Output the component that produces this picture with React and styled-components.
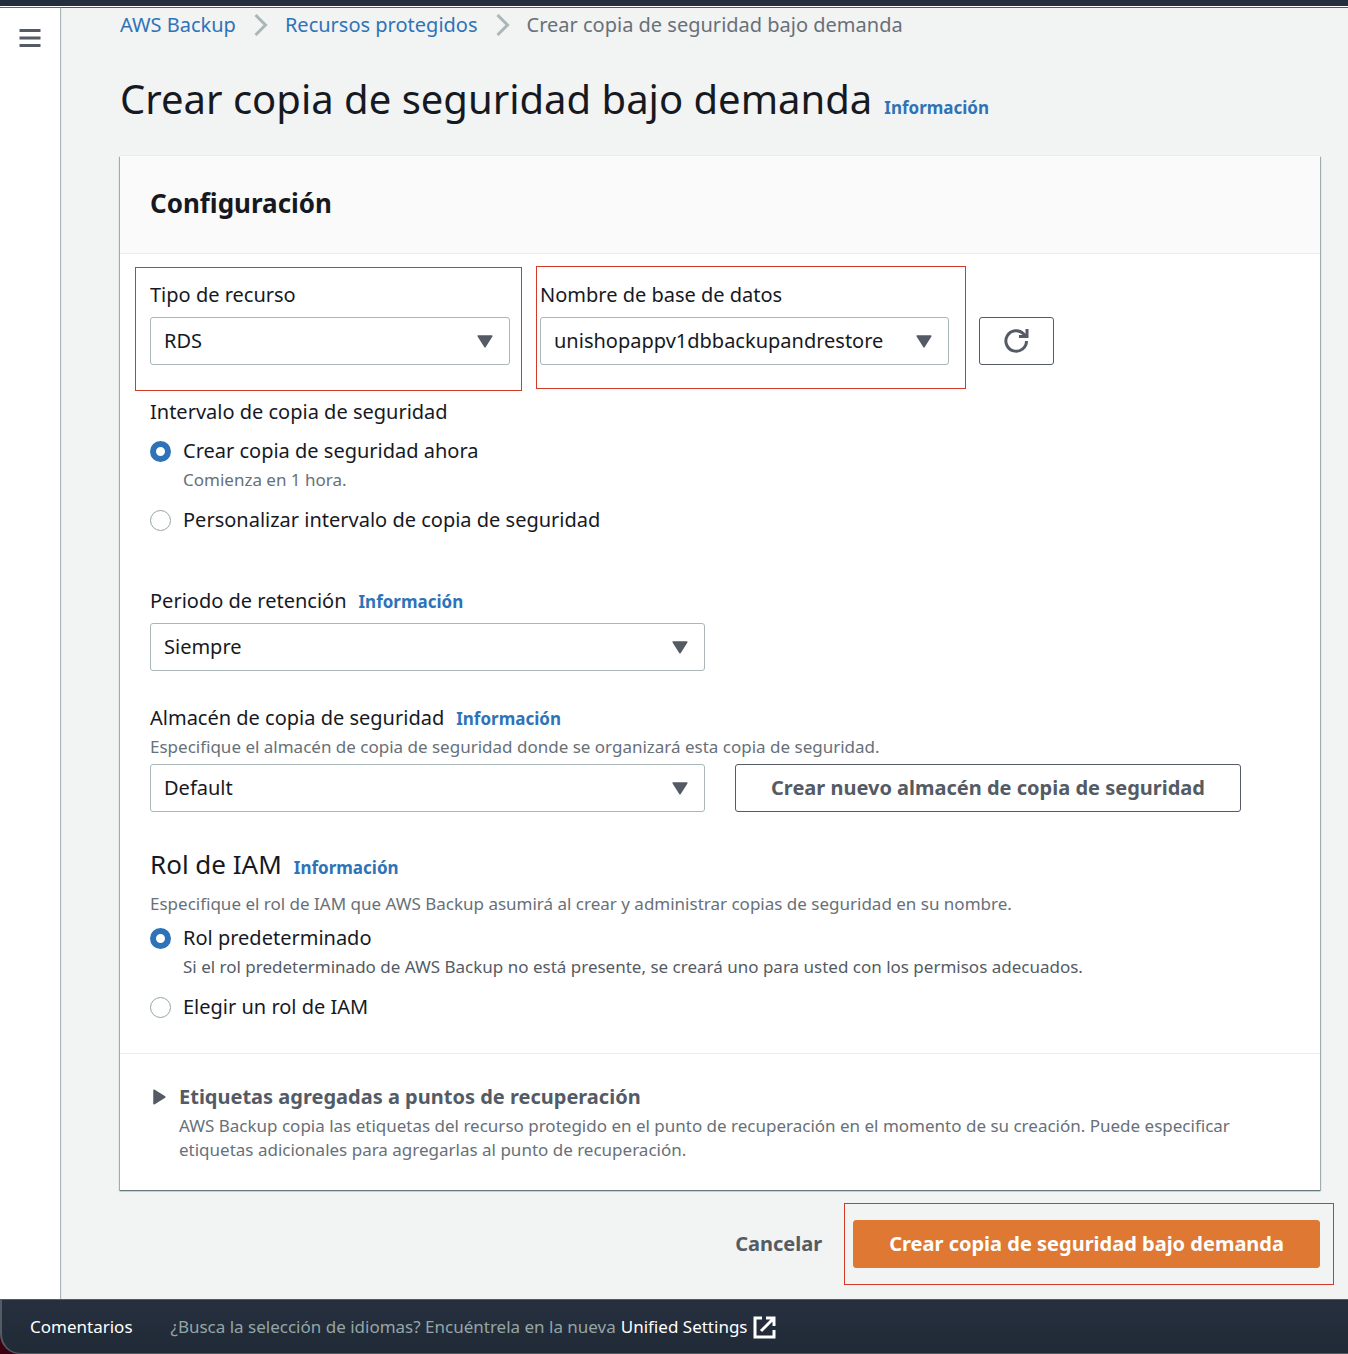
import React, { useState } from "react";
import styled, { createGlobalStyle } from "styled-components";

const font = '"Noto Sans", "Open Sans", sans-serif';

const GlobalStyle = createGlobalStyle`
  *, *::before, *::after { box-sizing: border-box; }
  body { margin: 0; background: #3a0010; }
  body, button, select, input { font-family: ${font}; }
  h1, h2, h3, p, fieldset, legend, ol { margin: 0; padding: 0; border: 0; }
`;

const Shell = styled.div`
  display: flex;
  flex-direction: column;
  min-height: 100vh;
  font-size: 20px;
  line-height: 32px;
  color: #16191f;
`;

const TopBar = styled.header`
  height: 8px;
  background: #232f3e;
  border-bottom: 1px solid #545b64;
  box-shadow: inset 0 -1px 0 #fff;
`;

const Body = styled.div`
  display: flex;
  flex: 1;
  background: #f2f3f3;
`;

const SideNav = styled.nav`
  flex: none;
  width: 60px;
  padding: 18px 18px 0;
  background: #fff;
  box-shadow: 1px 0 1px #aab7b8;
`;

const IconButton = styled.button`
  display: flex;
  align-items: center;
  justify-content: center;
  padding: 0;
  border: 0;
  background: none;
  color: #545b64;
  cursor: pointer;
`;

const Main = styled.main`
  flex: 1;
  min-width: 0;
  padding: 1px 28px 30px 60px;
`;

const Crumbs = styled.ol`
  display: flex;
  align-items: center;
  gap: 17px;
  list-style: none;
  color: #687078;
`;

const Crumb = styled.li`
  display: flex;
  align-items: center;
  gap: 18px;
`;

const Link = styled.a`
  color: #2e73b8;
  text-decoration: none;
`;

const InfoLink = styled(Link)`
  font-size: 17px;
  line-height: 24px;
  font-weight: 700;
`;

const PageTitle = styled.div`
  display: flex;
  align-items: baseline;
  gap: 12px;
  padding: 31px 0 30px;
`;

const Title = styled.h1`
  font-size: 40px;
  line-height: 54px;
  font-weight: 400;
`;

const Card = styled.section`
  background: #fff;
  box-shadow: 0 1px 1px #687b7c, 1px 1px 1px #aab7b8, -1px 1px 1px #aab7b8, 0 -1px 0 #eaeded;
`;

const CardHeader = styled.div`
  padding: 29px 30px 32px;
  background: #fafafa;
  border-bottom: 1px solid #eaeded;
`;

const CardTitle = styled.h2`
  font-size: 26px;
  line-height: 36px;
  font-weight: 700;
`;

const CardBody = styled.div`
  padding: 25px 30px 30px;
`;

const Row = styled.div`
  display: grid;
  grid-template-columns: ${(p) => p.$columns};
  align-items: end;
  gap: 30px;
`;

const Stack = styled.div`
  margin-top: ${(p) => p.$top}px;
`;

const LabelRow = styled.div`
  display: flex;
  align-items: baseline;
  gap: 12px;
`;

const FieldLabel = styled.label`
  display: block;
`;

const Marked = styled.div`
  position: relative;

  &::after {
    content: "";
    position: absolute;
    inset: ${(p) => p.$inset};
    border: 1px solid #d13a26;
    pointer-events: none;
  }
`;

const SelectBox = styled.div`
  position: relative;
  margin-top: ${(p) => (p.$tight ? 5 : 6)}px;

  svg {
    position: absolute;
    top: 18px;
    right: 17px;
    pointer-events: none;
  }
`;

const NativeSelect = styled.select`
  display: block;
  width: 100%;
  height: 48px;
  padding: 0 44px 2px 13px;
  appearance: none;
  border: 1px solid #aab7b8;
  border-radius: 3px;
  background: #fff;
  color: #16191f;
  font-size: 20px;
`;

const buttonKinds = {
  normal: { border: "#545b64", background: "#fff", color: "#545b64", pad: 35 },
  primary: { border: "#df7832", background: "#df7832", color: "#fff", pad: 35 },
  link: { border: "transparent", background: "transparent", color: "#545b64", pad: 30 },
};

const Button = styled.button`
  height: 48px;
  padding: 0 ${(p) => buttonKinds[p.$kind].pad}px 2px;
  border: 1px solid ${(p) => buttonKinds[p.$kind].border};
  border-radius: 3px;
  background: ${(p) => buttonKinds[p.$kind].background};
  color: ${(p) => buttonKinds[p.$kind].color};
  font-size: 20px;
  font-weight: 700;
  white-space: nowrap;
  cursor: pointer;
`;

const RefreshButton = styled(IconButton)`
  width: 75px;
  height: 48px;
  border: 1px solid #545b64;
  border-radius: 3px;
  background: #fff;
`;

const Hint = styled.p`
  font-size: 17px;
  line-height: 24px;
  color: ${(p) => (p.$dark ? "#545b64" : "#687078")};
  padding-top: 1px;
`;

const RadioRow = styled.div`
  display: grid;
  grid-template-columns: 21px 1fr;
  column-gap: 12px;
  align-items: center;
  margin-top: ${(p) => p.$top}px;

  p { grid-column: 2; }
`;

const Radio = styled.input`
  appearance: none;
  width: 21px;
  height: 21px;
  margin: 0;
  border: 1px solid #95a5a6;
  border-radius: 50%;
  background: #fff;

  &:checked { border: 6px solid #2e73b8; }
`;

const SubTitle = styled.h3`
  font-size: 26px;
  line-height: 36px;
  font-weight: 400;
`;

const Expandable = styled.div`
  display: grid;
  grid-template-columns: 18px 1fr;
  column-gap: 11px;
  padding: 27px 30px 28px;
  border-top: 1px solid #eaeded;
`;

const ExpandTitle = styled.h3`
  font-size: 20px;
  line-height: 32px;
  font-weight: 700;
  color: #545b64;
`;

const Actions = styled.div`
  display: flex;
  justify-content: flex-end;
  margin-top: 30px;
`;

const Footer = styled.footer`
  display: flex;
  align-items: center;
  gap: 38px;
  height: 55px;
  padding: 1px 28px 0;
  border: solid #545b64;
  border-width: 1px 0 1px 2px;
  border-bottom-left-radius: 20px;
  background: linear-gradient(#252f3e, #212b37);
  font-size: 17px;
  line-height: 24px;
  color: #95a5a6;
`;

const FooterLink = styled.a`
  display: inline-flex;
  align-items: center;
  gap: 5px;
  color: #fff;
  text-decoration: none;
`;

const FooterText = styled.p`
  display: flex;
  gap: 5px;
`;

const FooterBackdrop = styled.div`
  background: #3a0010;
`;

function Chevron() {
  return (
    <svg width="14" height="24" viewBox="0 0 14 24" fill="none" stroke="#aab7b8" strokeWidth="3" aria-hidden="true">
      <path d="M1.5 2 L11.5 12 L1.5 22" />
    </svg>
  );
}

function DownArrow() {
  return (
    <svg width="16" height="13" viewBox="0 0 16 13" fill="#545b64" stroke="#545b64" strokeWidth="1.5" strokeLinejoin="round" aria-hidden="true">
      <path d="M1.2 1 H14.8 L8 11.8 Z" />
    </svg>
  );
}

function Select({ id, value, tight }) {
  return (
    <SelectBox $tight={tight}>
      <NativeSelect id={id} defaultValue={value}>
        <option>{value}</option>
      </NativeSelect>
      <DownArrow />
    </SelectBox>
  );
}

function Info() {
  return <InfoLink href="#info">Información</InfoLink>;
}

function RadioOption({ id, name, checked, onChange, label, hint, darkHint, top }) {
  return (
    <RadioRow $top={top}>
      <Radio type="radio" id={id} name={name} checked={checked} onChange={onChange} />
      <FieldLabel htmlFor={id}>{label}</FieldLabel>
      {hint && <Hint $dark={darkHint}>{hint}</Hint>}
    </RadioRow>
  );
}

export default function App() {
  const [backupWindow, setBackupWindow] = useState("now");
  const [role, setRole] = useState("default");

  return (
    <Shell>
      <GlobalStyle />
      <TopBar />
      <Body>
        <SideNav>
          <IconButton aria-label="Abrir navegación">
            <svg width="24" height="24" viewBox="0 0 24 24" fill="none" stroke="currentColor" strokeWidth="3" aria-hidden="true">
              <path d="M1.5 4.5 H22.5 M1.5 12 H22.5 M1.5 19.5 H22.5" />
            </svg>
          </IconButton>
        </SideNav>
        <Main>
          <Crumbs>
            <Crumb>
              <Link href="#backup">AWS Backup</Link>
              <Chevron />
            </Crumb>
            <Crumb>
              <Link href="#protected">Recursos protegidos</Link>
              <Chevron />
            </Crumb>
            <Crumb>Crear copia de seguridad bajo demanda</Crumb>
          </Crumbs>

          <PageTitle>
            <Title>Crear copia de seguridad bajo demanda</Title>
            <Info />
          </PageTitle>

          <Card>
            <CardHeader>
              <CardTitle>Configuración</CardTitle>
            </CardHeader>
            <CardBody>
              <Row $columns="minmax(0, 360fr) minmax(0, 409fr) minmax(0, 311fr)">
                <Marked $inset="-12px -12px -26px -15px">
                  <FieldLabel htmlFor="type">Tipo de recurso</FieldLabel>
                  <Select id="type" value="RDS" />
                </Marked>
                <Marked $inset="-13px -17px -24px -4px">
                  <FieldLabel htmlFor="database">Nombre de base de datos</FieldLabel>
                  <Select id="database" value="unishopappv1dbbackupandrestore" />
                </Marked>
                <RefreshButton aria-label="Actualizar">
                  <svg width="26" height="26" viewBox="0 0 26 26" fill="none" stroke="currentColor" strokeWidth="3" aria-hidden="true">
                    <path d="M22.5 13 A10.3 10.3 0 1 1 19.5 5.7 L22 8.5" />
                    <path d="M23 1 V8.5 H15" />
                  </svg>
                </RefreshButton>
              </Row>

              <Stack $top={31} role="radiogroup" aria-labelledby="window-label">
                <div id="window-label">Intervalo de copia de seguridad</div>
                <RadioOption
                  id="window-now" name="window" top={7}
                  checked={backupWindow === "now"} onChange={() => setBackupWindow("now")}
                  label="Crear copia de seguridad ahora" hint="Comienza en 1 hora."
                />
                <RadioOption
                  id="window-custom" name="window" top={12}
                  checked={backupWindow === "custom"} onChange={() => setBackupWindow("custom")}
                  label="Personalizar intervalo de copia de seguridad"
                />
              </Stack>

              <Stack $top={49}>
                <LabelRow>
                  <FieldLabel htmlFor="retention">Periodo de retención</FieldLabel>
                  <Info />
                </LabelRow>
                <Row $columns="1fr 1fr">
                  <Select id="retention" value="Siempre" />
                </Row>
              </Stack>

              <Stack $top={31}>
                <LabelRow>
                  <FieldLabel htmlFor="vault">Almacén de copia de seguridad</FieldLabel>
                  <Info />
                </LabelRow>
                <Hint>Especifique el almacén de copia de seguridad donde se organizará esta copia de seguridad.</Hint>
                <Row $columns="1fr 1fr">
                  <Select id="vault" value="Default" tight />
                  <div>
                    <Button $kind="normal">Crear nuevo almacén de copia de seguridad</Button>
                  </div>
                </Row>
              </Stack>

              <Stack $top={34} role="radiogroup" aria-labelledby="role-label">
                <LabelRow>
                  <SubTitle id="role-label">Rol de IAM</SubTitle>
                  <Info />
                </LabelRow>
                <Stack $top={9}>
                  <Hint>Especifique el rol de IAM que AWS Backup asumirá al crear y administrar copias de seguridad en su nombre.</Hint>
                </Stack>
                <RadioOption
                  id="role-default" name="role" top={6} darkHint
                  checked={role === "default"} onChange={() => setRole("default")}
                  label="Rol predeterminado"
                  hint="Si el rol predeterminado de AWS Backup no está presente, se creará uno para usted con los permisos adecuados."
                />
                <RadioOption
                  id="role-choose" name="role" top={12}
                  checked={role === "choose"} onChange={() => setRole("choose")}
                  label="Elegir un rol de IAM"
                />
              </Stack>
            </CardBody>
            <Expandable>
              <IconButton aria-label="Expandir etiquetas">
                <svg width="13" height="16" viewBox="0 0 13 16" fill="#545b64" stroke="#545b64" strokeWidth="1.5" strokeLinejoin="round" aria-hidden="true">
                  <path d="M1 1.2 V14.8 L11.8 8 Z" />
                </svg>
              </IconButton>
              <ExpandTitle>Etiquetas agregadas a puntos de recuperación</ExpandTitle>
              <span />
              <Hint>
                AWS Backup copia las etiquetas del recurso protegido en el punto de recuperación en el momento de su
                creación. Puede especificar etiquetas adicionales para agregarlas al punto de recuperación.
              </Hint>
            </Expandable>
          </Card>

          <Actions>
            <Button $kind="link">Cancelar</Button>
            <Marked $inset="-17px -14px -17px -9px">
              <Button $kind="primary">Crear copia de seguridad bajo demanda</Button>
            </Marked>
          </Actions>
        </Main>
      </Body>
      <FooterBackdrop>
        <Footer>
          <FooterLink href="#feedback">Comentarios</FooterLink>
          <FooterText>
            ¿Busca la selección de idiomas? Encuéntrela en la nueva
            <FooterLink href="#settings">
              Unified Settings
              <svg width="23" height="23" viewBox="0 0 23 23" fill="none" stroke="currentColor" strokeWidth="3" aria-hidden="true">
                <path d="M9 2 H2 V21 H21 V14" />
                <path d="M13 2 H21 V10 M21 2 L8 15" />
              </svg>
            </FooterLink>
          </FooterText>
        </Footer>
      </FooterBackdrop>
    </Shell>
  );
}
